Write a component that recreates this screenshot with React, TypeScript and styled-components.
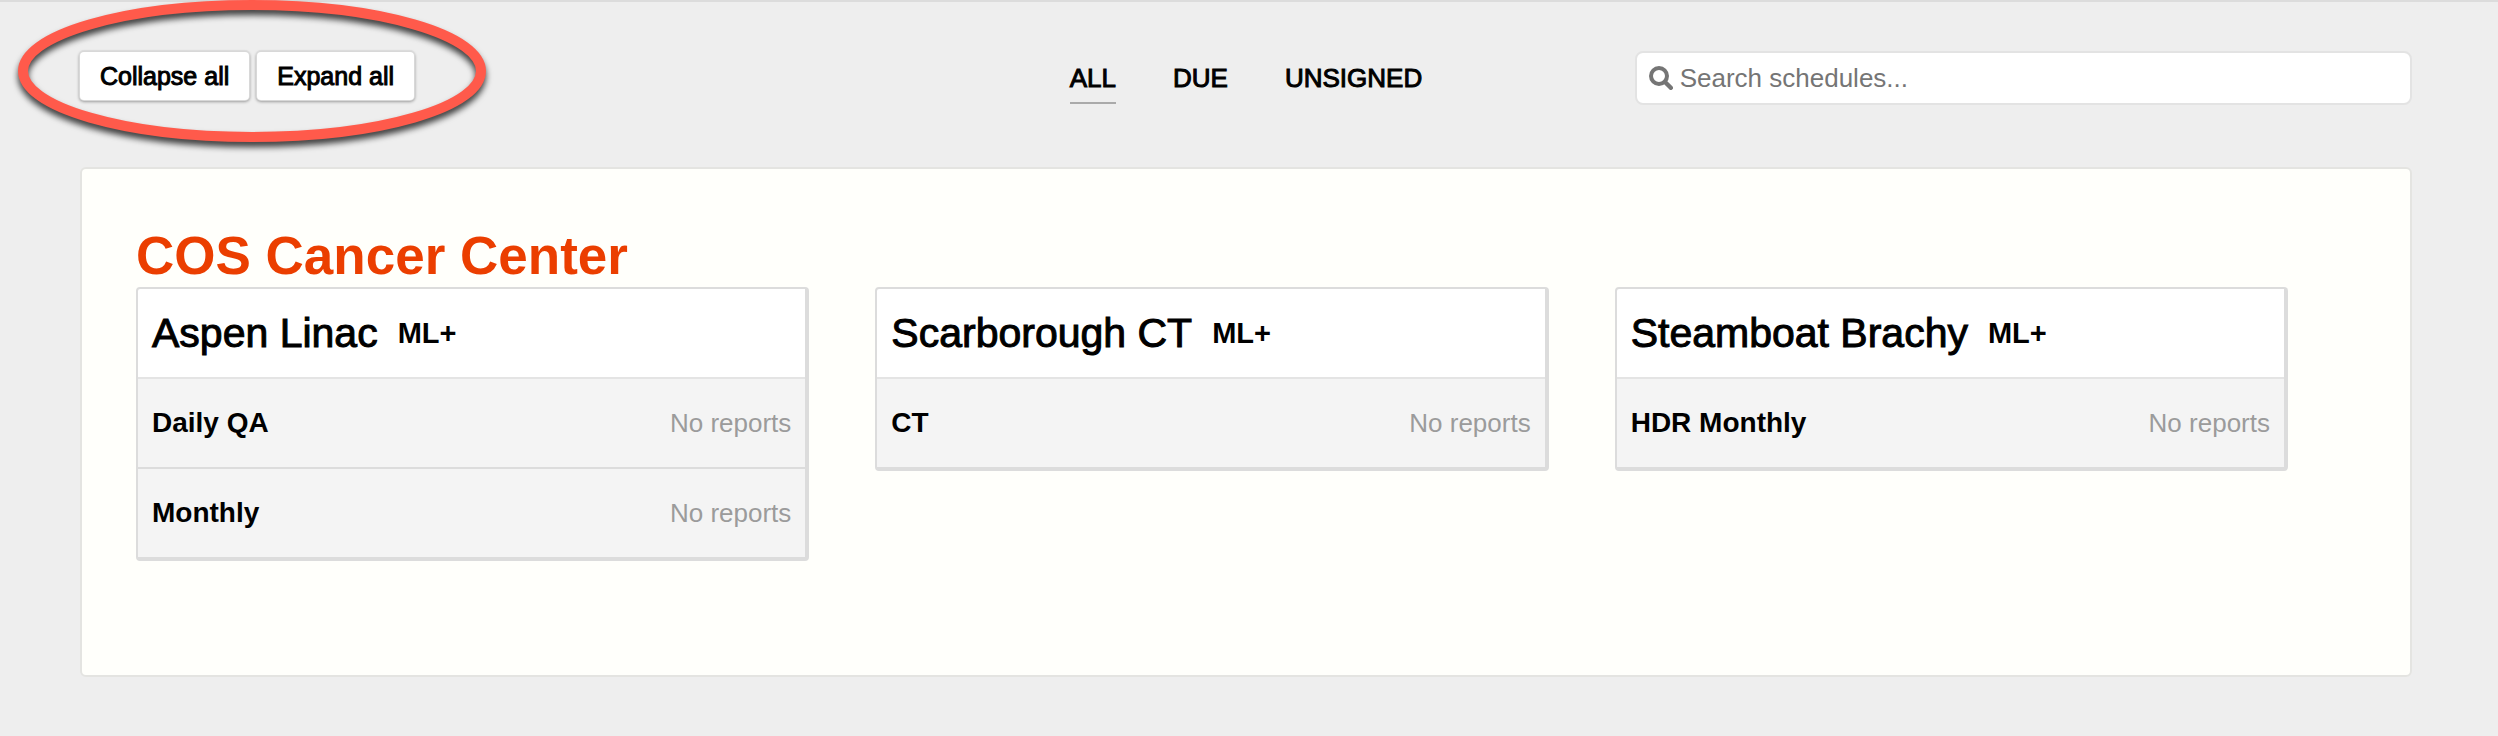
import React, { useState } from "react";
import styled, { createGlobalStyle } from "styled-components";

const GlobalStyle = createGlobalStyle`
  *, *::before, *::after {
    box-sizing: border-box;
  }

  body {
    margin: 0;
    background: #eeeeee;
    color: #000000;
    font-family: "Liberation Sans", Arial, sans-serif;
  }

  button, input {
    font-family: inherit;
  }
`;

const Page = styled.main`
  border-top: 2px solid #dcdcdc;
  padding: 48px 86px 58px 80px;
`;

const Toolbar = styled.header`
  display: grid;
  grid-template-columns: repeat(3, minmax(0, 1fr));
  align-items: start;
  margin-bottom: 62px;
`;

const ButtonGroup = styled.div`
  position: relative;
  display: flex;
  justify-self: start;
  gap: 8px;
  padding-top: 2px;
`;

const ToolButton = styled.button`
  height: 48px;
  padding: 0 20px;
  border: 0;
  border-radius: 4px;
  background: #ffffff;
  color: #000000;
  font-size: 25px;
  line-height: 48px;
  white-space: nowrap;
  -webkit-text-stroke: 1px currentColor;
  box-shadow: 0 0 0 1px #d8d8d8, 0 -1px 0 1px #dcdcdc, 0 1px 3px 1px rgba(0, 0, 0, 0.35);
  cursor: pointer;
`;

const Highlight = styled.svg`
  position: absolute;
  top: -50px;
  left: -70px;
  width: 486px;
  height: 160px;
  overflow: visible;
  pointer-events: none;
  filter: drop-shadow(0 5px 3px rgba(0, 0, 0, 0.75));
`;

const Tabs = styled.nav`
  display: flex;
  justify-content: center;
  gap: 57px;
  padding-top: 11px;
`;

const Tab = styled.a<{ $active: boolean }>`
  height: 43px;
  border-bottom: 2px solid ${({ $active }) => ($active ? "#aaaaaa" : "transparent")};
  color: #000000;
  font-size: 26px;
  line-height: 34px;
  text-decoration: none;
  -webkit-text-stroke: 1px currentColor;
`;

const SearchBox = styled.label`
  display: flex;
  align-items: center;
  gap: 7px;
  height: 54px;
  margin-top: 1px;
  padding: 0 12px;
  border: 2px solid #e3e3e3;
  border-radius: 8px;
  background: #ffffff;
  color: #757575;
`;

const SearchIcon = styled.svg`
  flex: none;
  width: 24px;
  height: 24px;
`;

const SearchInput = styled.input`
  flex: 1;
  min-width: 0;
  padding: 0;
  border: 0;
  outline: 0;
  background: transparent;
  color: #000000;
  font-size: 26px;
  line-height: 34px;

  &::placeholder {
    color: #757575;
    opacity: 1;
  }
`;

const Panel = styled.section`
  min-height: 510px;
  padding: 58px 122px 60px 54px;
  border: 2px solid #e4e4e1;
  border-radius: 6px;
  background: #fffffb;
`;

const SiteName = styled.h1`
  margin: 0 0 2px;
  color: #eb3e00;
  font-size: 53px;
  line-height: 58px;
`;

const Cards = styled.div`
  display: grid;
  grid-template-columns: repeat(3, minmax(0, 1fr));
  align-items: start;
  gap: 66px;
`;

const Card = styled.article`
  border: 2px solid #dcdcdc;
  border-right-width: 4px;
  border-bottom-width: 4px;
  border-radius: 4px;
  background: #ffffff;
`;

const CardHeader = styled.header`
  display: flex;
  align-items: center;
  gap: 20px;
  height: 88px;
  padding: 0 14px;
  line-height: 88px;
`;

const MachineName = styled.h2`
  margin: 0;
  font-size: 41px;
  font-weight: 400;
  -webkit-text-stroke: 1px currentColor;
`;

const Badge = styled.span`
  font-size: 29px;
  font-weight: 700;
`;

const ScheduleList = styled.ul`
  margin: 0;
  padding: 0;
  list-style: none;
`;

const ScheduleRow = styled.li`
  display: flex;
  align-items: center;
  justify-content: space-between;
  height: 90px;
  padding: 0 14px;
  border-top: 2px solid #dcdcdc;
  background: #f4f4f4;

  &:first-child {
    border-top-color: #e4e4e4;
  }
`;

const ScheduleName = styled.span`
  font-size: 28px;
  font-weight: 700;
  line-height: 36px;
`;

const Status = styled.span`
  color: #9b9b9b;
  font-size: 26px;
  line-height: 36px;
`;

const tabs = ["ALL", "DUE", "UNSIGNED"];

const machines = [
  { name: "Aspen Linac", schedules: ["Daily QA", "Monthly"] },
  { name: "Scarborough CT", schedules: ["CT"] },
  { name: "Steamboat Brachy", schedules: ["HDR Monthly"] },
];

export default function App() {
  const [active, setActive] = useState("ALL");
  const [expanded, setExpanded] = useState(true);

  return (
    <>
      <GlobalStyle />
      <Page>
        <Toolbar>
          <ButtonGroup>
            <ToolButton type="button" onClick={() => setExpanded(false)}>
              Collapse all
            </ToolButton>
            <ToolButton type="button" onClick={() => setExpanded(true)}>
              Expand all
            </ToolButton>
            <Highlight viewBox="0 0 486 160" aria-hidden="true">
              <ellipse cx="242" cy="71" rx="229" ry="66" fill="none" stroke="#ff5a4b" strokeWidth="10" />
            </Highlight>
          </ButtonGroup>
          <Tabs>
            {tabs.map((tab) => (
              <Tab key={tab} href={`#${tab.toLowerCase()}`} $active={tab === active} onClick={() => setActive(tab)}>
                {tab}
              </Tab>
            ))}
          </Tabs>
          <SearchBox>
            <SearchIcon viewBox="0 0 24 24" fill="none" stroke="currentColor" aria-hidden="true">
              <circle cx="10" cy="10" r="8" strokeWidth="4" />
              <path d="M16 16L21.8 21.8" strokeWidth="4.4" strokeLinecap="round" />
            </SearchIcon>
            <SearchInput type="text" placeholder="Search schedules..." aria-label="Search schedules" />
          </SearchBox>
        </Toolbar>
        <Panel>
          <SiteName>COS Cancer Center</SiteName>
          <Cards>
            {machines.map(({ name, schedules }) => (
              <Card key={name}>
                <CardHeader>
                  <MachineName>{name}</MachineName>
                  <Badge>ML+</Badge>
                </CardHeader>
                {expanded && (
                  <ScheduleList>
                    {schedules.map((schedule) => (
                      <ScheduleRow key={schedule}>
                        <ScheduleName>{schedule}</ScheduleName>
                        <Status>No reports</Status>
                      </ScheduleRow>
                    ))}
                  </ScheduleList>
                )}
              </Card>
            ))}
          </Cards>
        </Panel>
      </Page>
    </>
  );
}
